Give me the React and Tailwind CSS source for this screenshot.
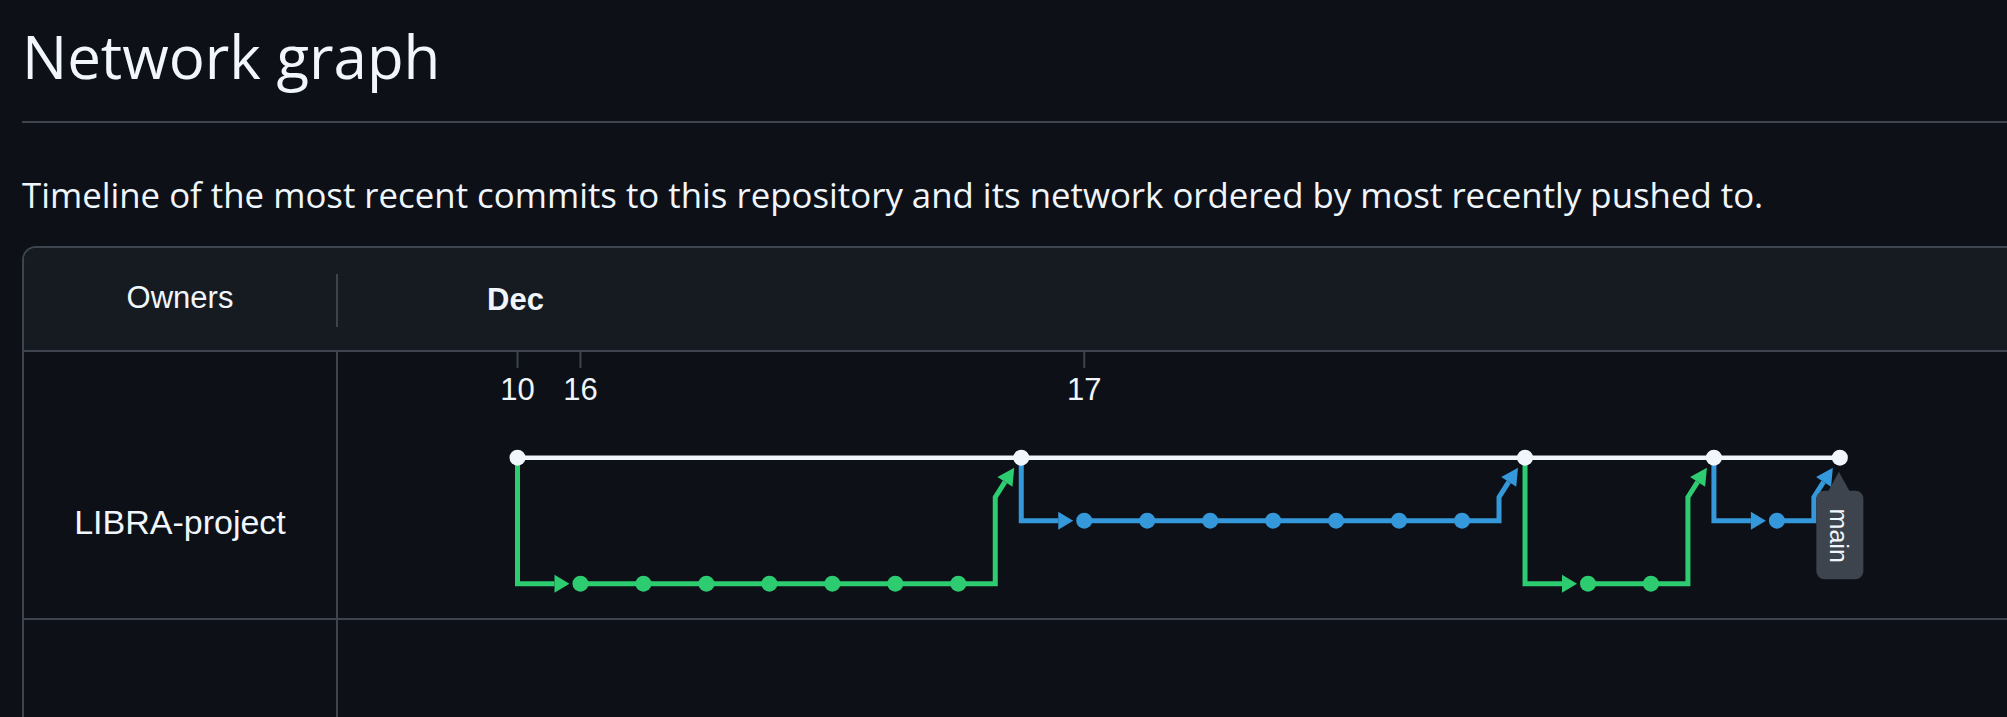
import React from 'react';

const GREEN = '#2ecc71';
const BLUE = '#3498db';
const WHITE = '#f0f6fc';
const LINE = '#3d444d';

const X0 = 179.5;
const STEP = 62.97;
const WY = 105.7;
const BY = 168.7;
const GY = 231.7;
const cx = (c) => X0 + c * STEP;

const branches = [
  { from: 0, to: 8, y: GY, color: GREEN, dots: [1, 2, 3, 4, 5, 6, 7] },
  { from: 8, to: 16, y: BY, color: BLUE, dots: [9, 10, 11, 12, 13, 14, 15] },
  { from: 16, to: 19, y: GY, color: GREEN, dots: [17, 18] },
  { from: 19, to: 21, y: BY, color: BLUE, dots: [20] },
];

const mainCommits = [0, 8, 16, 19, 21];
const ticks = [
  { col: 0, label: '10' },
  { col: 1, label: '16' },
  { col: 9, label: '17' },
];

function Branch({ from, to, y, color, dots }) {
  const xs = cx(from);
  const xe = cx(to);
  const x1 = cx(dots[0]);
  return (
    <g>
      <path d={`M${xs} ${WY} V${y} H${x1 - 26}`} fill="none" stroke={color} strokeWidth="5" />
      <polygon points={`${x1 - 26},${y - 9} ${x1 - 11},${y} ${x1 - 26},${y + 9}`} fill={color} />
      <path
        d={`M${x1} ${y} H${xe - 26} V${WY + 39.5} L${xe - 16.3} ${WY + 24.2}`}
        fill="none"
        stroke={color}
        strokeWidth="5"
      />
      <polygon
        points={`${xe - 7},${WY + 10} ${xe - 23.8},${WY + 19.3} ${xe - 8.8},${WY + 29.1}`}
        fill={color}
      />
      {dots.map((d) => (
        <circle key={d} cx={cx(d)} cy={y} r="8" fill={color} />
      ))}
    </g>
  );
}

function Graph() {
  const mx = cx(21);
  return (
    <svg width="1700" height="266" className="block shrink-0">
      {ticks.map((t) => (
        <g key={t.label}>
          <line x1={cx(t.col)} x2={cx(t.col)} y1="0" y2="16" stroke={LINE} strokeWidth="2" />
          <text
            x={cx(t.col)}
            y="48"
            textAnchor="middle"
            fill={WHITE}
            fontSize="31"
            fontFamily="'Liberation Sans', Arial, sans-serif"
          >
            {t.label}
          </text>
        </g>
      ))}
      <line x1={cx(0)} x2={cx(21)} y1={WY} y2={WY} stroke={WHITE} strokeWidth="4.5" />
      {branches.map((b) => (
        <Branch key={b.from} {...b} />
      ))}
      {mainCommits.map((c) => (
        <circle key={c} cx={cx(c)} cy={WY} r="8" fill={WHITE} />
      ))}
      <g>
        <polygon points={`${mx - 1},${WY + 14} ${mx - 12},${WY + 34} ${mx + 10},${WY + 34}`} fill={LINE} />
        <rect x={mx - 23.5} y={WY + 33} width="47" height="88.6" rx="8" fill={LINE} />
        <text
          transform={`translate(${mx - 9.8} ${WY + 78}) rotate(90)`}
          textAnchor="middle"
          fill={WHITE}
          fontSize="25"
          fontFamily="'Liberation Sans', Arial, sans-serif"
        >
          main
        </text>
      </g>
    </svg>
  );
}

export default function App() {
  return (
    <div className="min-h-screen overflow-hidden bg-[#0d1117] pl-[22px] pt-[26px] text-[#f0f6fc]">
      <div className="w-[2200px]">
        <h1 className="font-['Open_Sans',sans-serif] text-[60px] font-normal leading-[60px]">
          Network graph
        </h1>
        <div className="mt-[35px] h-[2px] bg-[#3d444d]" />
        <p className="mt-[54px] font-['Open_Sans',sans-serif] text-[34.8px] leading-[35px]">
          Timeline of the most recent commits to this repository and its network ordered by most recently pushed to.
        </p>

        <div className="mt-[34px] rounded-tl-[14px] border-l-2 border-t-2 border-[#3d444d] font-['Liberation_Sans',Arial,sans-serif]">
          <div className="flex h-[104px] rounded-tl-[12px] border-b-2 border-[#3d444d] bg-[#161b22]">
            <div className="w-[312px] pt-[34px] text-center text-[31px] leading-[31px]">Owners</div>
            <div className="mt-[26px] h-[53px] w-[2px] bg-[#3d444d]" />
            <div className="ml-[149px] pt-[36px] text-[31px] font-bold leading-[31px]">Dec</div>
          </div>

          <div className="flex h-[268px] border-b-2 border-[#3d444d]">
            <div className="w-[314px] shrink-0 border-r-2 border-[#3d444d] pt-[153px] text-center text-[34px] leading-[34px]">
              LIBRA-project
            </div>
            <Graph />
          </div>

          <div className="flex h-[120px]">
            <div className="w-[314px] shrink-0 border-r-2 border-[#3d444d]" />
          </div>
        </div>
      </div>
    </div>
  );
}
